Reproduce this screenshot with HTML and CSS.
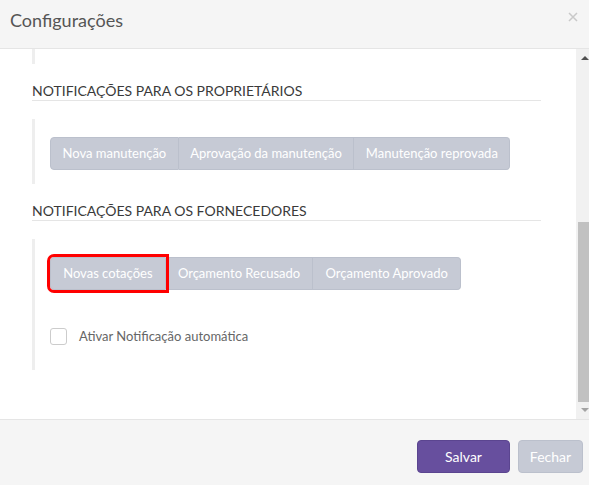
FILE: index.html
```html
<!DOCTYPE html>
<html lang="pt">
<head>
<meta charset="utf-8">
<title>Configurações</title>
<link rel="stylesheet" href="styles.css">
</head>
<body>
<div class="modal">
  <div class="modal-header">
    <h4 class="modal-title">Configurações</h4>
    <svg class="close" width="10" height="10" viewBox="0 0 10 10"><path d="M1 1 L9 9 M9 1 L1 9" stroke="#c9c9c9" stroke-width="1.5" fill="none"/></svg>
  </div>
  <div class="modal-body">
    <div class="content">
      <div class="bar-top"></div>
      <div class="section-title">NOTIFICAÇÕES PARA OS PROPRIETÁRIOS</div>
      <div class="block">
        <div class="btn-group">
          <span class="btn">Nova manutenção</span>
          <span class="btn">Aprovação da manutenção</span>
          <span class="btn">Manutenção reprovada</span>
        </div>
      </div>
      <div class="section-title">NOTIFICAÇÕES PARA OS FORNECEDORES</div>
      <div class="block block-last">
        <div class="btn-group btn-group-wide">
          <span class="btn btn-marked">Novas cotações</span>
          <span class="btn">Orçamento Recusado</span>
          <span class="btn">Orçamento Aprovado</span>
        </div>
        <label class="check">
          <span class="check-box"></span>
          <span class="check-label">Ativar Notificação automática</span>
        </label>
      </div>
    </div>
    <div class="scrollbar">
      <div class="arrow arrow-up"></div>
      <div class="track"><div class="thumb"></div></div>
      <div class="arrow arrow-down"></div>
    </div>
  </div>
  <div class="modal-footer">
    <span class="fbtn fbtn-primary">Salvar</span>
    <span class="fbtn fbtn-default">Fechar</span>
  </div>
</div>
</body>
</html>
```
FILE: styles.css
```css
* { box-sizing: border-box; }
html, body { margin: 0; padding: 0; }
body {
  font-family: Lato, "Open Sans", Arial, sans-serif;
  background: #fff;
  width: 589px;
  height: 485px;
  overflow: hidden;
}
.modal { width: 589px; height: 485px; display: flex; flex-direction: column; }
.modal-header {
  background: #f5f5f5;
  height: 49px;
  border-bottom: 1px solid #e5e5e5;
  padding: 10px 11px 0 10px;
  display: flex;
  justify-content: space-between;
  align-items: flex-start;
}
.modal-title {
  margin: 0;
  font-size: 18px;
  line-height: 21px;
  font-weight: 400;
  color: #555;
}
.close { margin-top: 2px; }
.modal-body {
  height: 371px;
  display: flex;
  border-bottom: 1px solid #e5e5e5;
}
.content {
  flex: 1;
  padding: 0 35px 0 32px;
}
.bar-top { height: 15px; border-left: 3px solid #eee; }
.section-title {
  margin-top: 18px;
  height: 19px;
  line-height: 18px;
  font-size: 14px;
  color: #3a3a3a;
  border-bottom: 1px solid #e5e5e5;
}
.block {
  margin-top: 18px;
  border-left: 3px solid #eee;
  padding: 18px 0 14px 15px;
}
.block-last { padding-bottom: 26px; }
.btn-group { display: flex; }
.btn {
  height: 33px;
  line-height: 31px;
  padding: 0 11.5px;
  font-size: 13px;
  color: #fff;
  background: #c6cad5;
  border: 1px solid #bbc0cc;
  border-left-width: 0;
  white-space: nowrap;
}
.btn-group-wide .btn { padding: 0 12.2px; }
.btn:first-child { border-left-width: 1px; border-radius: 4px 0 0 4px; }
.btn:last-child { border-radius: 0 4px 4px 0; }
.btn-marked { outline: 3px solid #ff0000; position: relative; z-index: 1; }
.check {
  margin-top: 38px;
  display: flex;
  align-items: center;
  height: 16px;
}
.check-box {
  width: 17px; height: 17px;
  border: 1px solid #ccc;
  border-radius: 3px;
  background: #fff;
}
.check-label {
  margin-left: 12px;
  font-size: 13px;
  color: #666;
}
.scrollbar {
  width: 13px;
  background: #f1f1f1;
  display: flex;
  flex-direction: column;
}
.arrow { height: 15px; position: relative; }
.arrow-up::after {
  content: ""; position: absolute; left: 5px; top: 7px;
  border-left: 4px solid transparent; border-right: 4px solid transparent;
  border-bottom: 4px solid #505050;
}
.arrow-down::after {
  content: ""; position: absolute; left: 5px; top: 4px;
  border-left: 4px solid transparent; border-right: 4px solid transparent;
  border-top: 4px solid #a3a3a3;
}
.track { flex: 1; position: relative; }
.thumb {
  position: absolute; left: 2px; right: 0;
  top: 158px; height: 180px;
  background: #c1c1c1;
}
.modal-footer {
  flex: 1;
  background: #f5f5f5;
  display: flex;
  justify-content: flex-end;
  align-items: flex-start;
  padding: 20px 6px 0 0;
  gap: 8px;
}
.fbtn {
  height: 33px;
  line-height: 31px;
  font-size: 14px;
  color: #fff;
  text-align: center;
  border-radius: 4px;
  border: 1px solid transparent;
}
.fbtn-primary { width: 93px; background: #674f9e; border-color: #5b4590; }
.fbtn-default { width: 65px; background: #c6cad5; border-color: #bbc0cc; }
```
